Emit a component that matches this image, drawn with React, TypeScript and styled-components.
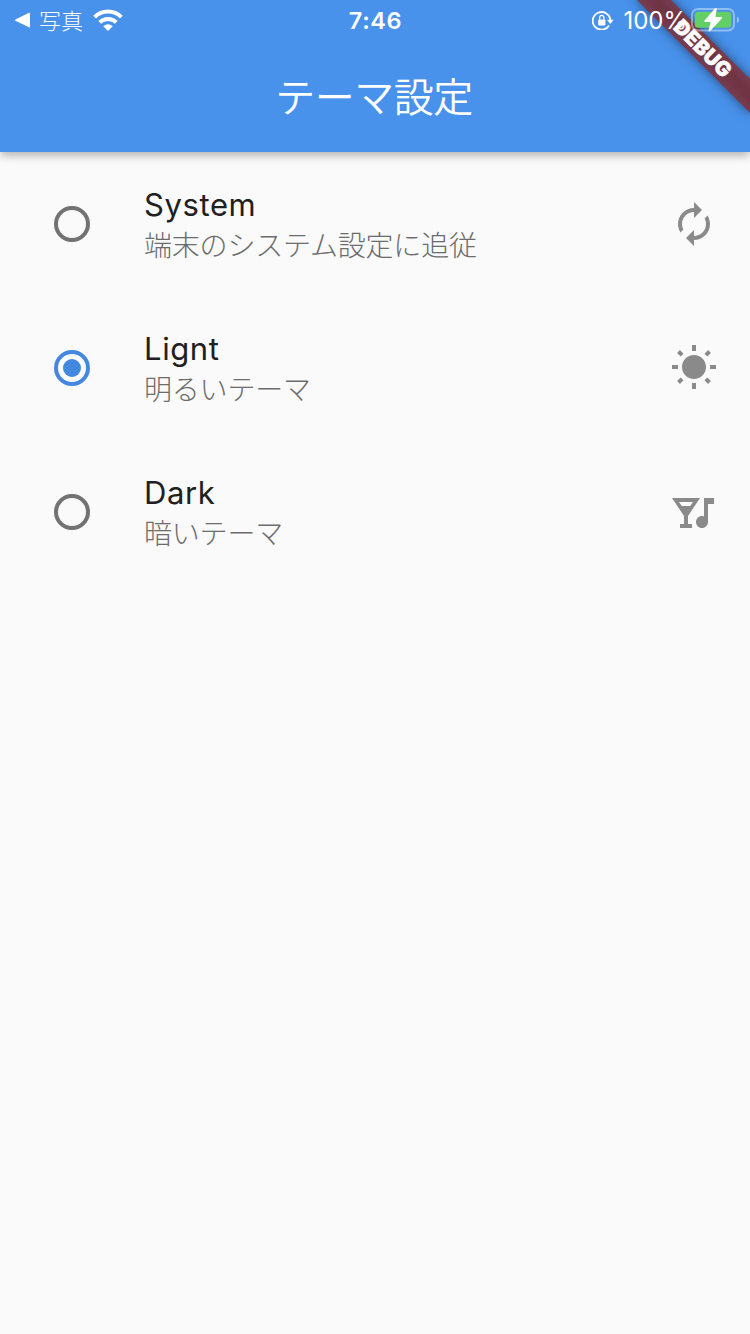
import React, { useState } from 'react';
import styled, { createGlobalStyle } from 'styled-components';
import type { IconType } from 'react-icons';
import { MdAutorenew, MdNightlife, MdWbSunny } from 'react-icons/md';

const GlobalStyle = createGlobalStyle`
  * { box-sizing: border-box; }
  body {
    margin: 0;
    background: #fafafa;
    font-family: Inter, "Noto Sans CJK JP", sans-serif;
  }
`;

const Screen = styled.div`
  position: relative;
  display: flex;
  flex-direction: column;
  width: 750px;
  height: 1334px;
  overflow: hidden;
  background: #fafafa;
`;

const Header = styled.header`
  display: flex;
  flex-direction: column;
  height: 152px;
  background: #4892ec;
  color: #fff;
  box-shadow: 0 4px 8px -2px rgba(0, 0, 0, 0.18), 0 6px 8px rgba(0, 0, 0, 0.08),
    0 2px 12px rgba(0, 0, 0, 0.08);
`;

const StatusBar = styled.div`
  position: relative;
  z-index: 2;
  display: grid;
  grid-template-columns: 1fr auto 1fr;
  align-items: center;
  height: 40px;
  padding: 0 11px 0 14px;
`;

const StatusGroup = styled.div<{ $end?: boolean }>`
  display: flex;
  align-items: center;
  justify-content: ${(p) => (p.$end ? 'flex-end' : 'flex-start')};
  height: 40px;
`;

const StatusText = styled.span`
  padding-top: 2px;
  line-height: 38px;
`;

const BackLabel = styled(StatusText)`
  margin: 0 10px 0 9px;
  font-size: 22px;
  font-weight: 300;
`;

const Clock = styled(StatusText)`
  margin-right: 2px;
  font-size: 23.5px;
  font-weight: 600;
  letter-spacing: 0.6px;
`;

const Percent = styled(StatusText)`
  margin: 0 4px 0 9px;
  font-size: 24px;
  font-weight: 400;
`;

const Title = styled.h1`
  margin: 0 2px 0 0;
  height: 112px;
  font-size: 40px;
  font-weight: 350;
  line-height: 116px;
  letter-spacing: -0.5px;
  text-align: center;
`;

const BannerRibbon = styled.div`
  position: absolute;
  z-index: 1;
  left: 622px;
  top: 35.5px;
  width: 160px;
  height: 24px;
  transform: rotate(45deg);
  background: linear-gradient(#783c50, #703545 35%, #703545 65%, #783c50);
  box-shadow: 0 0 12px rgba(0, 0, 0, 0.5);
  color: #fff;
  font-size: 20.4px;
  font-weight: 900;
  line-height: 24px;
  letter-spacing: 0.2px;
  text-align: center;
  text-indent: 2px;
  -webkit-text-stroke: 0.5px #fff;
`;

const Options = styled.div`
  display: flex;
  flex-direction: column;
`;

const Option = styled.div`
  display: flex;
  align-items: center;
  height: 144px;
  padding: 0 32px 0 54px;
  cursor: pointer;
`;

const Radio = styled.span<{ $on: boolean }>`
  display: flex;
  align-items: center;
  justify-content: center;
  width: 36px;
  height: 36px;
  border: 4px solid ${(p) => (p.$on ? '#4387df' : '#727272')};
  border-radius: 50%;

  &::after {
    content: '';
    width: 18px;
    height: 18px;
    border-radius: 50%;
    background: ${(p) => (p.$on ? '#4387df' : 'transparent')};
  }
`;

const OptionText = styled.div`
  display: flex;
  flex: 1;
  flex-direction: column;
  margin-left: 54px;
  padding-top: 4px;
`;

const OptionName = styled.span`
  color: #202020;
  font-size: 31px;
  font-weight: 400;
  line-height: 40px;
  letter-spacing: 0.6px;
`;

const OptionNote = styled.span`
  color: #6c6c6c;
  font-size: 28px;
  font-weight: 300;
  line-height: 42px;
  letter-spacing: -0.2px;
`;

interface Theme {
  id: string;
  name: string;
  note: string;
  icon: IconType;
}

const themes: Theme[] = [
  { id: 'system', name: 'System', note: '端末のシステム設定に追従', icon: MdAutorenew },
  { id: 'light', name: 'Lignt', note: '明るいテーマ', icon: MdWbSunny },
  { id: 'dark', name: 'Dark', note: '暗いテーマ', icon: MdNightlife },
];

const BackArrow = () => (
  <svg width="16" height="16" viewBox="0 0 16 16">
    <path d="M16 1.300v13.400q0 1-1 .6L1.400 8.700q-1-.7 0-1.300L15 .8q1-.4 1 .5z" fill="#fff" />
  </svg>
);

const Wifi = () => (
  <svg width="30" height="22" viewBox="0 0 30 22">
    <g fill="none" stroke="#fff" strokeWidth="4">
      <path d="M1.600 8.100a19 19 0 0 1 26.800 0" />
      <path d="M6.700 13.300a11.800 11.800 0 0 1 16.600 0" />
    </g>
    <path d="M15 22l-4.700-4.700a6.700 6.700 0 0 1 9.400 0z" fill="#fff" />
  </svg>
);

const RotationLock = () => (
  <svg width="22" height="20" viewBox="0 0 22 20">
    <path d="M17 15.500A8.800 8.800 0 1 1 18.300 10" fill="none" stroke="#fff" strokeWidth="1.800" />
    <path d="M15 9.800h6.600l-3.300 4.200z" fill="#fff" />
    <rect x="6.200" y="9.400" width="7.200" height="6" rx="0.800" fill="#fff" />
    <path d="M7.700 9.600V7.500a2.100 2.100 0 0 1 4.200 0v2.100" fill="none" stroke="#fff" strokeWidth="1.300" />
  </svg>
);

const Battery = () => (
  <svg width="48" height="24" viewBox="0 0 48 24">
    <rect x="1" y="1" width="42" height="21.500" rx="6" fill="none" stroke="#fff" strokeOpacity="0.4" strokeWidth="2" />
    <path d="M46 8.500q2 1 2 3.250t-2 3.250z" fill="#fff" fillOpacity="0.5" />
    <rect x="3.700" y="3.700" width="36.600" height="16" rx="3.500" fill="#65cf67" />
    <path
      d="M24.800 .9L14.200 13.200h6.500l-2.200 9.300L30.200 9.800h-6.800z"
      fill="#fff"
      stroke="#fff"
      strokeWidth="1.800"
      strokeLinejoin="round"
    />
  </svg>
);

export default function App() {
  const [selected, setSelected] = useState('light');

  return (
    <Screen>
      <GlobalStyle />
      <Header>
        <StatusBar>
          <StatusGroup>
            <BackArrow />
            <BackLabel>写真</BackLabel>
            <Wifi />
          </StatusGroup>
          <Clock>7:46</Clock>
          <StatusGroup $end>
            <RotationLock />
            <Percent>100%</Percent>
            <Battery />
          </StatusGroup>
        </StatusBar>
        <Title>テーマ設定</Title>
      </Header>
      <BannerRibbon>DEBUG</BannerRibbon>
      <Options>
        {themes.map(({ id, name, note, icon: Icon }) => (
          <Option key={id} onClick={() => setSelected(id)}>
            <Radio $on={id === selected} />
            <OptionText>
              <OptionName>{name}</OptionName>
              <OptionNote>{note}</OptionNote>
            </OptionText>
            <Icon size={48} color="#8a8a8a" />
          </Option>
        ))}
      </Options>
    </Screen>
  );
}
